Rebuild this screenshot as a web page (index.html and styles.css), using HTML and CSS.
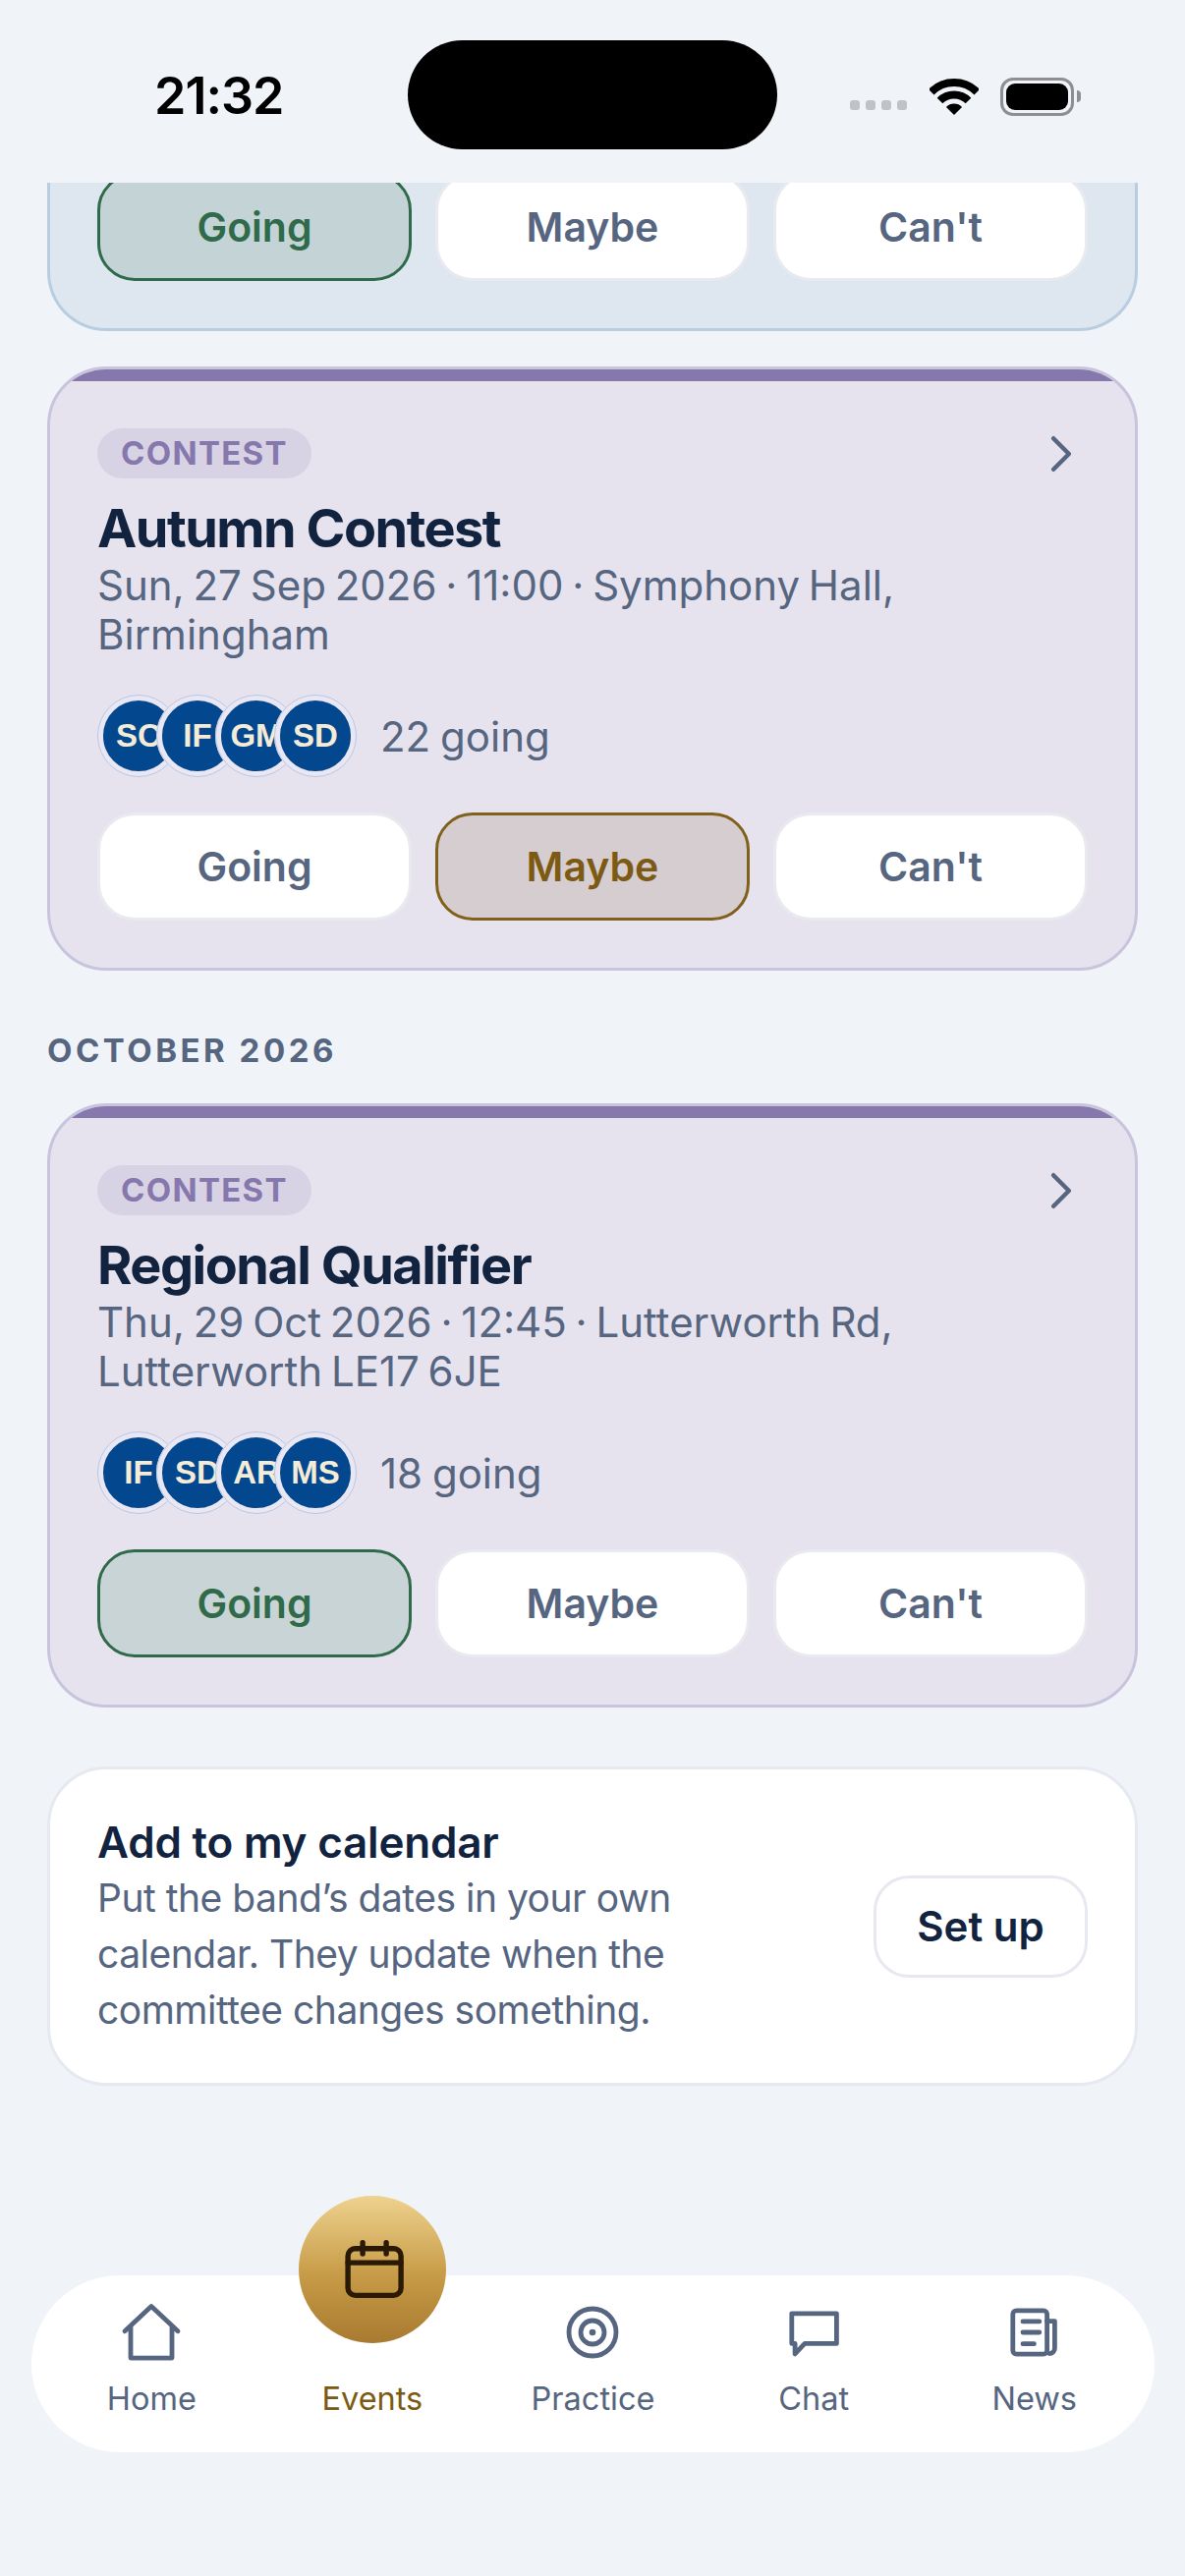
FILE: index.html
```html
<!DOCTYPE html>
<html lang="en">
<head>
    <meta charset="UTF-8">
    <meta name="viewport" content="width=device-width, initial-scale=1.0">
    <title>Events</title>
    <link rel="stylesheet" href="styles.css">
</head>
<body>
    <!-- Status bar -->
    <header class="status-bar">
        <div class="status-time">21:32</div>
        <div class="status-island"></div>
        <div class="status-icons">
            <div class="signal"><span></span><span></span><span></span><span></span></div>
            <svg class="wifi" viewBox="0 0 50 37" width="50" height="37">
                <path d="M1.7 13.7a33 33 0 0 1 46.6 0M10.5 22.5a20.5 20.5 0 0 1 29 0" fill="none" stroke="#000" stroke-width="8"/>
                <path d="M25 37 16.9 28.9a11.5 11.5 0 0 1 16.2 0z" fill="#000"/>
            </svg>
            <div class="battery"><div class="battery-level"></div></div>
            <div class="battery-nub"></div>
        </div>
    </header>

    <main class="content">
        <div class="card card-blue card-cut">
            <div class="card-body">
                <div class="rsvp">
                    <button class="rsvp-btn going">Going</button>
                    <button class="rsvp-btn">Maybe</button>
                    <button class="rsvp-btn">Can't</button>
                </div>
            </div>
        </div>

        <div class="card card-purple">
            <div class="card-bar"></div>
            <div class="card-body">
                <div class="card-top">
                    <span class="badge">CONTEST</span>
                    <svg class="chevron" viewBox="0 0 24 24" width="54" height="54"><path d="M8.5 5l7 7-7 7"/></svg>
                </div>
                <h3 class="card-title">Autumn Contest</h3>
                <p class="card-sub">Sun, 27 Sep 2026 · 11:00 · Symphony Hall, Birmingham</p>
                <div class="attendees">
                    <div class="avatars">
                        <span class="avatar">SC</span>
                        <span class="avatar">IF</span>
                        <span class="avatar">GM</span>
                        <span class="avatar">SD</span>
                    </div>
                    <span class="going-count">22 going</span>
                </div>
                <div class="rsvp">
                    <button class="rsvp-btn">Going</button>
                    <button class="rsvp-btn maybe">Maybe</button>
                    <button class="rsvp-btn">Can't</button>
                </div>
            </div>
        </div>

        <h2 class="month">OCTOBER 2026</h2>

        <div class="card card-purple">
            <div class="card-bar"></div>
            <div class="card-body">
                <div class="card-top">
                    <span class="badge">CONTEST</span>
                    <svg class="chevron" viewBox="0 0 24 24" width="54" height="54"><path d="M8.5 5l7 7-7 7"/></svg>
                </div>
                <h3 class="card-title">Regional Qualifier</h3>
                <p class="card-sub">Thu, 29 Oct 2026 · 12:45 · Lutterworth Rd, Lutterworth LE17 6JE</p>
                <div class="attendees">
                    <div class="avatars">
                        <span class="avatar">IF</span>
                        <span class="avatar">SD</span>
                        <span class="avatar">AR</span>
                        <span class="avatar">MS</span>
                    </div>
                    <span class="going-count">18 going</span>
                </div>
                <div class="rsvp">
                    <button class="rsvp-btn going">Going</button>
                    <button class="rsvp-btn">Maybe</button>
                    <button class="rsvp-btn">Can't</button>
                </div>
            </div>
        </div>

        <div class="calendar-card">
            <div class="calendar-text">
                <h3>Add to my calendar</h3>
                <p>Put the band’s dates in your own calendar. They update when the committee changes something.</p>
            </div>
            <button class="setup-btn">Set up</button>
        </div>
    </main>

    <!-- Bottom navigation -->
    <nav class="tabbar">
        <div class="tab">
            <svg class="tab-icon" viewBox="0 0 24 24"><path d="M3 11.6 12 3.2l9 8.4M5 9.8V20.7h14V9.8"/></svg>
            <span>Home</span>
        </div>
        <div class="tab tab-active">
            <div class="tab-bubble">
                <svg class="tab-icon" viewBox="-0.7 0 24 24"><rect x="3" y="4.9" width="18" height="15.9" rx="2.5"/><path d="M3 9.7h18M8 2.9v3.8M16 2.9v3.8"/></svg>
            </div>
            <span>Events</span>
        </div>
        <div class="tab">
            <svg class="tab-icon" viewBox="0 0 24 24"><circle cx="12" cy="12" r="8"/><circle cx="12" cy="12" r="4"/><circle class="dot" cx="12" cy="12" r="1.1"/></svg>
            <span>Practice</span>
        </div>
        <div class="tab">
            <svg class="tab-icon" viewBox="0 0 24 24"><path d="M4.6 5.6h15.2v10.2H9L5.7 19.3v-3.5H4.6z"/></svg>
            <span>Chat</span>
        </div>
        <div class="tab">
            <svg class="tab-icon" viewBox="0 0 24 24"><rect x="4.6" y="4.6" width="11.6" height="14.8" rx="1.2"/><path d="M16.2 8.2h2.6v9.2a1.8 1.8 0 0 1-1.8 1.8M8 8.3h5.6M8 12h5.6M8 15.9h3.8"/></svg>
            <span>News</span>
        </div>
    </nav>
</body>
</html>
```

FILE: styles.css
```css
* {
    box-sizing: border-box;
}
body {
    font-family: "Inter", "Liberation Sans", sans-serif;
    background-color: #f0f4f9;
    color: #566580;
    margin: 0;
    width: 1206px;
    height: 2622px;
    overflow: hidden;
    display: flex;
    flex-direction: column;
}
h2, h3, p {
    margin: 0;
}
button {
    font-family: inherit;
}

/* Status bar */
.status-bar {
    height: 186px;
    flex-shrink: 0;
    padding-top: 41px;
    display: flex;
    align-items: flex-start;
}
.status-time {
    width: 415px;
    padding-left: 157px;
    margin-top: 31px;
    font-size: 52px;
    line-height: 52px;
    font-weight: 600;
    color: #000;
    letter-spacing: -1px;
}
.status-island {
    width: 376px;
    height: 111px;
    border-radius: 56px;
    background-color: #000;
}
.status-icons {
    margin-top: 37px;
    margin-left: 74px;
    display: flex;
    align-items: center;
    height: 40px;
}
.signal {
    display: flex;
    gap: 6px;
    margin-top: 18px;
    margin-right: 23px;
}
.signal span {
    width: 10px;
    height: 10px;
    border-radius: 3px;
    background-color: #c0c2c6;
}
.wifi {
    margin-right: 22px;
}
.battery {
    width: 75px;
    height: 39px;
    border: 3px solid #8e8e93;
    border-radius: 13px;
    padding: 3px;
}
.battery-level {
    width: 100%;
    height: 100%;
    border-radius: 9px;
    background-color: #000;
}
.battery-nub {
    width: 4px;
    height: 12px;
    margin-left: 3px;
    border-radius: 0 6px 6px 0;
    background-color: #8e8e93;
}

/* Scroll area */
.content {
    flex: 1;
    overflow: hidden;
    padding: 0 48px;
}
.card {
    border: 3px solid;
    border-radius: 60px;
    overflow: hidden;
    margin-bottom: 36px;
}
.card-blue {
    background-color: #dee6ef;
    border-color: #b9cde0;
}
.card-cut {
    border-top: none;
    border-radius: 0 0 60px 60px;
}
.card-cut .card-body {
    padding-top: 0;
}
.card-cut .rsvp {
    margin-top: -10px;
}
.card-purple {
    background-color: #e6e3ee;
    border-color: #c9c4dd;
}
.card-bar {
    height: 12px;
    background-color: #8678ad;
}
.card-body {
    padding: 48px;
}
.card-top {
    display: flex;
    justify-content: space-between;
    align-items: center;
    height: 51px;
}
.badge {
    height: 51px;
    line-height: 51px;
    padding: 0 24px;
    border-radius: 26px;
    background-color: #d8d3e4;
    color: #8678ad;
    font-size: 33px;
    font-weight: 700;
    letter-spacing: 1.3px;
}
.chevron {
    fill: none;
    stroke: #566580;
    stroke-width: 2;
    stroke-linecap: round;
    stroke-linejoin: round;
}
.card-title {
    margin-top: 18px;
    font-size: 54px;
    line-height: 66px;
    font-weight: 700;
    letter-spacing: -1.5px;
    color: #12233f;
}
.card-sub {
    font-size: 42px;
    line-height: 50px;
    word-spacing: -3px;
    color: #566580;
}
.attendees {
    display: flex;
    align-items: center;
    margin-top: 36px;
    gap: 24px;
}
.avatars {
    display: flex;
}
.avatar {
    width: 84px;
    height: 84px;
    border-radius: 50%;
    border: 6px solid #e9e7f3;
    outline: 1px solid #b9c6e0;
    outline-offset: -1px;
    background-color: #03478f;
    color: #f5ecd8;
    font-family: "Liberation Sans", sans-serif;
    font-size: 33px;
    font-weight: 700;
    display: flex;
    align-items: center;
    justify-content: center;
    margin-left: -24px;
    overflow: hidden;
}
.avatar:first-child {
    margin-left: 0;
}
.going-count {
    font-size: 42px;
    word-spacing: -2px;
}
.rsvp {
    display: flex;
    gap: 24px;
    margin-top: 36px;
}
.rsvp-btn {
    flex: 1;
    height: 110px;
    padding-bottom: 1px;
    border: 3px solid #e8eaef;
    border-radius: 38px;
    background-color: #ffffff;
    color: #566580;
    font-size: 41px;
    font-weight: 600;
}
.rsvp-btn.going {
    background-color: #c9d4d6;
    border-color: #2f6b4a;
    color: #2f6b4a;
}
.card-blue .rsvp-btn.going {
    background-color: #c4d3d6;
}
.rsvp-btn.maybe {
    background-color: #d6cdd0;
    border-color: #80601a;
    color: #7d5a14;
}

.month {
    margin-top: 60px;
    margin-bottom: 33px;
    font-size: 33px;
    line-height: 42px;
    font-weight: 700;
    letter-spacing: 3.5px;
}

/* Calendar card */
.calendar-card {
    margin-top: 60px;
    height: 325px;
    border: 3px solid #e6e9ef;
    border-radius: 60px;
    background-color: #ffffff;
    padding: 0 48px;
    display: flex;
    align-items: center;
    justify-content: space-between;
}
.calendar-text {
    width: 620px;
}
.calendar-text h3 {
    font-size: 44px;
    line-height: 56px;
    font-weight: 600;
    letter-spacing: -0.2px;
    color: #12233f;
}
.calendar-text p {
    font-size: 39px;
    line-height: 57px;
    letter-spacing: -0.5px;
}
.setup-btn {
    width: 218px;
    height: 104px;
    border: 3px solid #e6e9ef;
    border-radius: 36px;
    background-color: #ffffff;
    color: #12233f;
    font-size: 42px;
    font-weight: 600;
}

/* Bottom navigation */
.tabbar {
    flex-shrink: 0;
    height: 180px;
    margin: 0 31px 126px 32px;
    padding: 22px 10px 0;
    border-radius: 90px;
    background-color: #ffffff;
    display: grid;
    grid-template-columns: repeat(5, 1fr);
}
.tab {
    display: flex;
    flex-direction: column;
    align-items: center;
    font-size: 32.5px;
    line-height: 40px;
    color: #566580;
}
.tab span {
    margin-top: 12px;
}
.tab-icon {
    width: 72px;
    height: 72px;
    fill: none;
    stroke: #566580;
    stroke-width: 1.6;
    stroke-linecap: round;
    stroke-linejoin: round;
}
.tab-icon .dot {
    fill: #566580;
    stroke: none;
}
.tab-active {
    color: #7d5a14;
}
.tab-bubble {
    width: 150px;
    height: 150px;
    margin-top: -103px;
    margin-bottom: 25px;
    border-radius: 50%;
    background: linear-gradient(180deg, #eed28e 0%, #c69a46 55%, #a87a30 100%);
    display: flex;
    align-items: center;
    justify-content: center;
}
.tab-bubble .tab-icon {
    stroke: #2a1a05;
    stroke-width: 1.8;
}
```
